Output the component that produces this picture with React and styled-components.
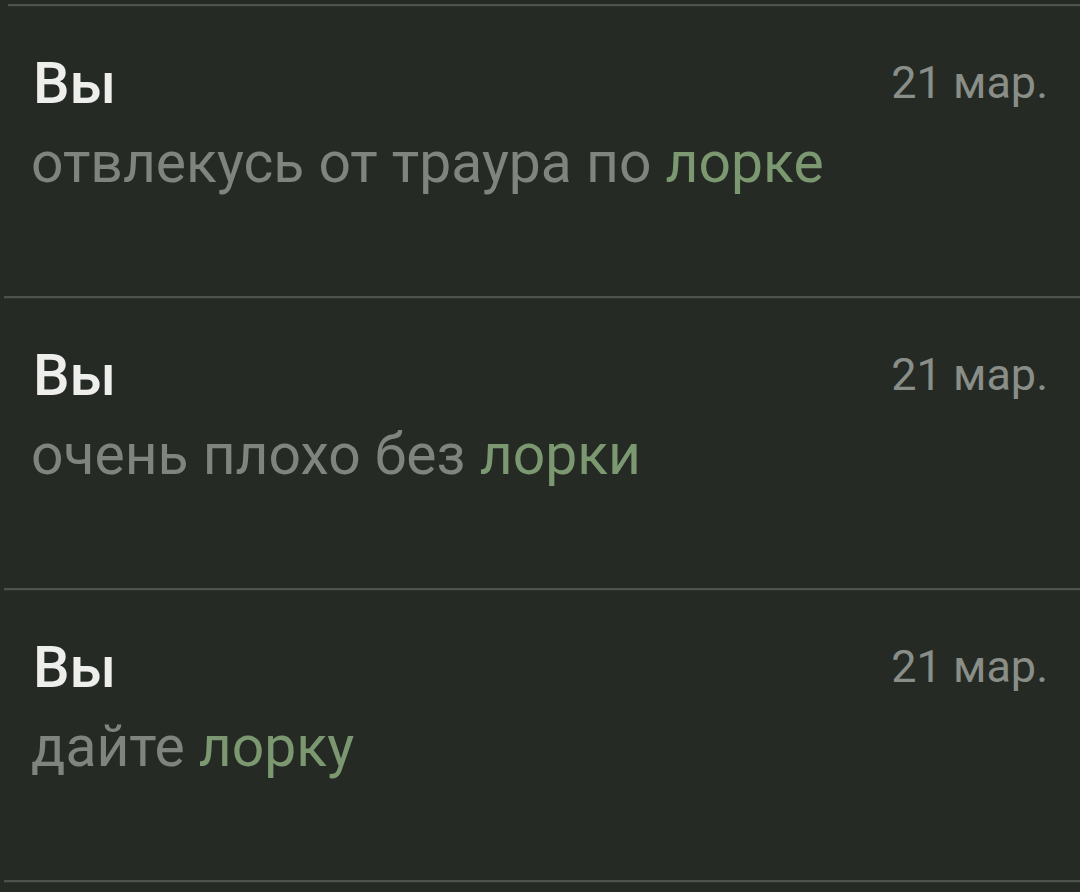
import React from "react";
import styled, { createGlobalStyle } from "styled-components";

const Global = createGlobalStyle`
  html, body { margin: 0; padding: 0; background: #262a25; }
  body { font-family: Roboto, "Noto Sans", "Liberation Sans", sans-serif; }
`;

const Page = styled.div`
  width: 1080px;
  height: 892px;
  background: #262a25;
  padding-top: 4px;
  box-sizing: border-box;
  overflow: hidden;
`;

const Item = styled.div`
  height: 292px;
  display: flex;
  flex-direction: column;
`;

const Divider = styled.div`
  height: 3px;
  margin-left: ${(p) => p.$inset || 4}px;
  background: #4d524b;
  border-bottom: 1px solid #30352f;
  box-sizing: border-box;
  flex-shrink: 0;
`;

const Header = styled.div`
  display: flex;
  justify-content: space-between;
  align-items: flex-start;
  padding: 44px 32px 0 33px;
`;

const Name = styled.div`
  font-size: 58px;
  line-height: 64px;
  font-weight: 500;
  color: #eeefed;
`;

const Time = styled.div`
  font-size: 45px;
  line-height: 64px;
  font-weight: 400;
  color: #8a8e88;
`;

const Message = styled.div`
  margin-top: 13px;
  padding: 0 31px;
  font-size: 57px;
  line-height: 70px;
  font-weight: 400;
  color: #80847e;
  white-space: nowrap;
`;

const Mention = styled.span`
  color: #7b9870;
`;

const items = [
  { text: "отвлекусь от траура по ", mention: "лорке" },
  { text: "очень плохо без ", mention: "лорки" },
  { text: "дайте ", mention: "лорку" },
];

export default function App() {
  return (
    <Page>
      <Global />
      {items.map((it, i) => (
        <Item key={i}>
          <Divider $inset={i === 0 ? 8 : 4} />
          <Header>
            <Name>Вы</Name>
            <Time>21 мар.</Time>
          </Header>
          <Message>
            {it.text}
            <Mention>{it.mention}</Mention>
          </Message>
        </Item>
      ))}
      <Divider $inset={4} />
    </Page>
  );
}
